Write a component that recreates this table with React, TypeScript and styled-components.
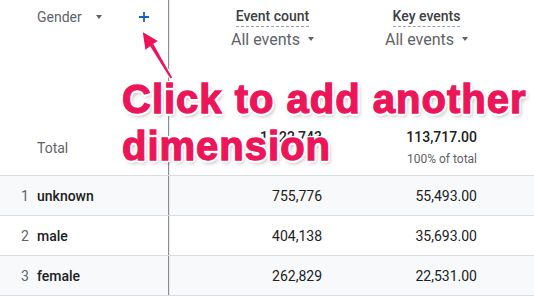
import { ReactNode } from "react"
import { styled, createGlobalStyle } from "styled-components"

const GlobalStyle = createGlobalStyle`
  html, body {
    margin: 0;
    padding: 0;
    background: #ffffff;
  }
  body {
    font-family: Roboto, "Noto Sans", Arial, sans-serif;
    -webkit-font-smoothing: antialiased;
  }
`

const COLS = "169px 169px 155px 1fr"

const Page = styled.div`
  position: relative;
  width: 534px;
  height: 296px;
  overflow: hidden;
  background: #ffffff;
`

const Row = styled.div<{ $h: number; $shade?: boolean; $line?: boolean }>`
  display: grid;
  grid-template-columns: ${COLS};
  height: ${(p) => p.$h}px;
  box-sizing: border-box;
  background: ${(p) => (p.$shade ? "#f8f9fa" : "#ffffff")};
  border-top: ${(p) => (p.$line ? "1px solid #dadce0" : "none")};
`

const DimCell = styled.div<{ $align?: string; $pb?: number; $pl?: number }>`
  display: flex;
  align-items: ${(p) => p.$align ?? "center"};
  padding-left: ${(p) => p.$pl ?? 21}px;
  padding-bottom: ${(p) => p.$pb ?? 0}px;
  box-sizing: border-box;
  border-right: 1px solid #8a8f94;
  box-shadow: 1px 0 0 rgba(0, 0, 0, 0.08);
`

const Index = styled.span`
  width: 16px;
  font-size: 14px;
  color: #5f6368;
`

const Name = styled.span<{ $muted?: boolean }>`
  font-size: 14px;
  color: ${(p) => (p.$muted ? "#5f6368" : "#202124")};
  font-weight: ${(p) => (p.$muted ? 400 : 500)};
  line-height: 20px;
`

const HeadDim = styled(DimCell)`
  align-items: flex-start;
  padding-top: 7px;
`

const HeadLabel = styled.div<{ $size?: number }>`
  display: flex;
  align-items: center;
  height: 20px;
  font-size: ${(p) => p.$size ?? 14}px;
  color: #5f6368;
`

const Caret = styled.span<{ $gap: number }>`
  display: inline-block;
  margin-left: ${(p) => p.$gap}px;
  width: 0;
  height: 0;
  border-left: 3.5px solid transparent;
  border-right: 3.5px solid transparent;
  border-top: 4px solid #5f6368;
`

const AddButton = styled.span`
  margin-left: 36px;
  display: flex;
  align-items: center;
  height: 20px;
`

const MetricHead = styled.div<{ $pr: number }>`
  display: flex;
  justify-content: flex-end;
  padding-top: 7px;
  padding-right: ${(p) => p.$pr}px;
`

const MetricBlock = styled.div`
  display: flex;
  flex-direction: column;
  align-items: center;
  gap: 2px;
`

const MetricTitle = styled.span`
  font-size: 14px;
  line-height: 19px;
  color: #3c4043;
  font-weight: 500;
  border-bottom: 1px dashed #9aa0a6;
`

const NumCell = styled.div<{ $align?: string; $pb?: number }>`
  display: flex;
  flex-direction: column;
  justify-content: ${(p) => p.$align ?? "center"};
  align-items: flex-end;
  padding-right: 16px;
  padding-bottom: ${(p) => p.$pb ?? 0}px;
  box-sizing: border-box;
`

const Num = styled.span<{ $strong?: boolean }>`
  font-size: 14px;
  line-height: 20px;
  color: #202124;
  font-weight: ${(p) => (p.$strong ? 500 : 400)};
`

const SubNum = styled.span`
  margin-top: 4px;
  font-size: 12px;
  line-height: 16px;
  color: #5f6368;
`

const Callout = styled.div`
  position: absolute;
  left: 122px;
  top: 76px;
  font-family: "Liberation Sans", Arial, sans-serif;
  font-weight: 700;
  font-size: 40px;
  line-height: 47px;
  letter-spacing: 1px;
  color: #ec1559;
  -webkit-text-stroke: 1.3px #ec1559;
  white-space: nowrap;
  text-shadow:
    -2px -2px 0 #fff, 2px -2px 0 #fff, -2px 2px 0 #fff, 2px 2px 0 #fff,
    0 -2.5px 0 #fff, 0 2.5px 0 #fff, -2.5px 0 0 #fff, 2.5px 0 0 #fff,
    2px 3px 4px rgba(0, 0, 0, 0.35);
`

const ArrowLayer = styled.svg`
  position: absolute;
  left: 0;
  top: 0;
  pointer-events: none;
`

type Metric = { title: string; pr: number }

const MetricHeader = ({ title, pr }: Metric) => (
  <MetricHead $pr={pr}>
    <MetricBlock>
      <MetricTitle>{title}</MetricTitle>
      <HeadLabel $size={16}>
        All events
        <Caret $gap={8} />
      </HeadLabel>
    </MetricBlock>
  </MetricHead>
)

const PlusIcon = () => (
  <svg width="12" height="12" viewBox="0 0 12 12">
    <path d="M6 1v10M1 6h10" stroke="#1a5fc8" strokeWidth="1.8" fill="none" />
  </svg>
)

type DataRow = { idx: number; name: string; events: string; keys: string }

const rows: DataRow[] = [
  { idx: 1, name: "unknown", events: "755,776", keys: "55,493.00" },
  { idx: 2, name: "male", events: "404,138", keys: "35,693.00" },
  { idx: 3, name: "female", events: "262,829", keys: "22,531.00" },
]

const Overlay = ({ children }: { children: ReactNode }) => <>{children}</>

export default function App() {
  return (
    <Page>
      <GlobalStyle />
      <Row $h={60}>
        <HeadDim $pl={37}>
          <HeadLabel>
            Gender
            <Caret $gap={14} />
          </HeadLabel>
          <AddButton>
            <PlusIcon />
          </AddButton>
        </HeadDim>
        <MetricHeader title="Event count" pr={24} />
        <MetricHeader title="Key events" pr={25} />
        <div />
      </Row>
      <Row $h={115}>
        <DimCell $align="flex-end" $pb={17} $pl={37}>
          <Name $muted>Total</Name>
        </DimCell>
        <NumCell $align="flex-end" $pb={28}>
          <Num $strong>1,422,743</Num>
        </NumCell>
        <NumCell $align="flex-end" $pb={8}>
          <Num $strong>113,717.00</Num>
          <SubNum>100% of total</SubNum>
        </NumCell>
        <div />
      </Row>
      {rows.map((r) => (
        <Row key={r.idx} $h={40} $line $shade={r.idx % 2 === 1}>
          <DimCell>
            <Index>{r.idx}</Index>
            <Name>{r.name}</Name>
          </DimCell>
          <NumCell>
            <Num>{r.events}</Num>
          </NumCell>
          <NumCell>
            <Num>{r.keys}</Num>
          </NumCell>
          <div />
        </Row>
      ))}
      <Row $h={20} $line>
        <DimCell />
        <div />
        <div />
        <div />
      </Row>
      <Overlay>
        <ArrowLayer width="534" height="296" viewBox="0 0 534 296">
          <g stroke="#ffffff" strokeWidth="1.2" strokeLinejoin="round">
            <path
              d="M142 31 L159 41 L154 44 L173 78 L170 79 L150 47 L145 51 Z"
              fill="#ec1559"
            />
          </g>
        </ArrowLayer>
        <Callout>
          Click to add another
          <br />
          dimension
        </Callout>
      </Overlay>
    </Page>
  )
}
